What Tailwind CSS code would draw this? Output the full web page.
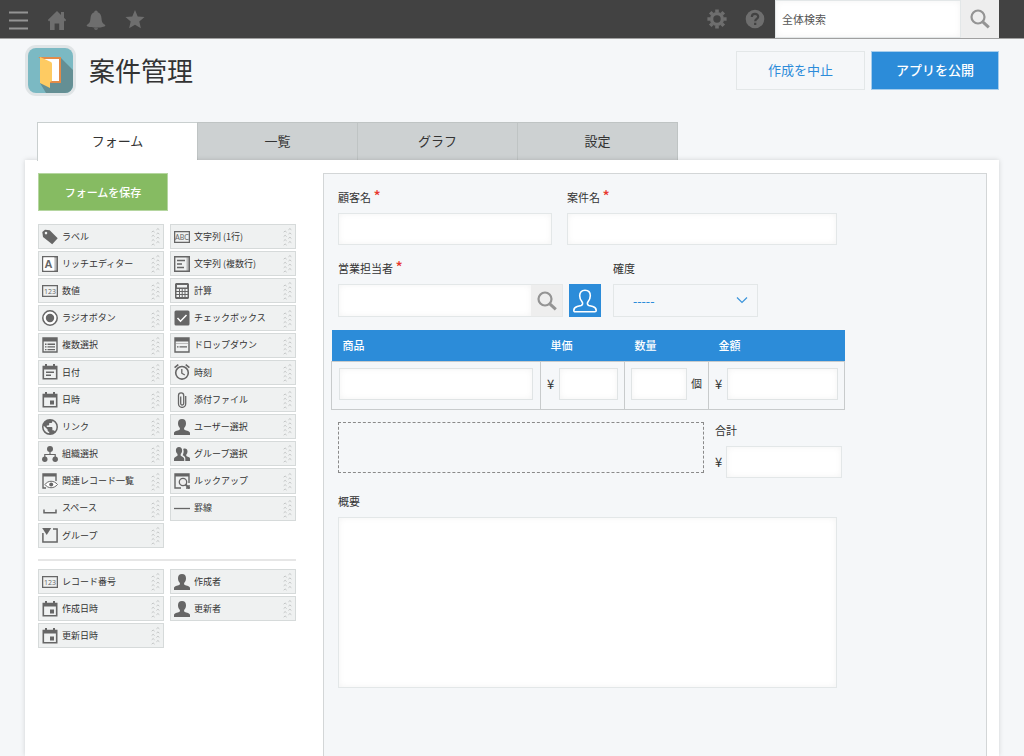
<!DOCTYPE html>
<html lang="ja">
<head>
<meta charset="utf-8">
<meta name="viewport" content="width=device-width, initial-scale=1">
<title>案件管理</title>
<script src="https://cdn.jsdelivr.net/npm/@tailwindcss/browser@4"></script>
</head>
<body class="flex min-h-screen flex-col overflow-x-hidden bg-[#f5f7f9] font-['Noto_Sans_CJK_JP',sans-serif] text-[11px] text-[#333]">

<svg class="hidden" aria-hidden="true">
  <symbol id="i-label" viewBox="0 0 16 16"><path fill="currentColor" fill-rule="evenodd" d="M.3 3 3 .7l4.700.5 8 8-5.500 6L1 8zM4 2.800A1.300 1.300 0 1 0 4 5.400 1.300 1.300 0 0 0 4 2.800z"/></symbol>
  <symbol id="i-text" viewBox="0 0 16 16"><path fill="none" stroke="currentColor" stroke-width="1.300" d="M.6 2.600h14.800v10.800H.6z"/><text x="8" y="11" text-anchor="middle" font-size="7" fill="currentColor" font-family="Lato">ABC</text></symbol>
  <symbol id="i-num" viewBox="0 0 16 16"><path fill="none" stroke="currentColor" stroke-width="1.300" d="M.6 2.600h14.800v10.800H.6z"/><text x="8" y="11" text-anchor="middle" font-size="7" fill="currentColor" font-family="Open Sans">123</text></symbol>
  <symbol id="i-rich" viewBox="0 0 16 16"><path fill="#bbb" d="M12 1h3v14h-3z"/><path fill="none" stroke="currentColor" stroke-width="1.400" d="M.7.7h14.600v14.600H.7z"/><path fill="#fff" d="M1.400 1.400h11v13.200h-11z"/><text x="6.500" y="12" text-anchor="middle" font-size="11" font-weight="700" fill="currentColor" font-family="Liberation Sans">A</text></symbol>
  <symbol id="i-multi" viewBox="0 0 16 16"><path fill="#bbb" d="M12.500 1h2.500v14h-2.500z"/><path fill="none" stroke="currentColor" stroke-width="1.400" d="M.7.7h14.600v14.600H.7zM3 4.500h8M3 8h5M3 11.500h7"/></symbol>
  <symbol id="i-calc" viewBox="0 0 16 16"><path fill="currentColor" fill-rule="evenodd" d="M2 0h12l1 1v14l-1 1H2l-1-1V1zM3 2v2.500h10V2zM2.500 6v2H5V6zM6 6v2h1.700V6zM8.700 6v2h1.800V6zM11.500 6v2h2V6zM2.500 9v2H5V9zM6 9v2h1.700V9zM8.700 9v2h1.800V9zM11.500 9v2h2V9zM2.500 12v2H5v-2zM6 12v2h1.700v-2zM8.700 12v2h1.800v-2zM11.500 12v2h2v-2z"/></symbol>
  <symbol id="i-radio" viewBox="0 0 16 16"><circle cx="8" cy="8" r="7.200" fill="#fff" stroke="currentColor" stroke-width="1.500"/><circle cx="8" cy="8" r="4.200" fill="currentColor"/></symbol>
  <symbol id="i-check" viewBox="0 0 16 16"><rect x=".5" y=".5" width="15" height="15" rx="1.500" fill="currentColor"/><path fill="none" stroke="#fff" stroke-width="1.500" d="m3.500 8 3 3.200L12.500 5"/></symbol>
  <symbol id="i-mselect" viewBox="0 0 16 16"><path fill="none" stroke="currentColor" stroke-width="1.400" d="M1 1h14v14H1z"/><path fill="currentColor" d="M1 1h14v3.500H1zM3 6.500h1.500V8H3zM5.500 6.500H13V8H5.500zM3 9.300h1.500v1.200H3zM5.500 9.300H13v1.200H5.500zM3 12h1.500v1.200H3zM5.500 12H13v1.200H5.500z"/></symbol>
  <symbol id="i-drop" viewBox="0 0 16 16"><path fill="none" stroke="currentColor" stroke-width="1.400" d="M1 1h14v14H1z"/><path fill="currentColor" d="M1 1h14v3.500H1zM3 9.300h1.500v1.200H3zM5.500 9.300H13v1.200H5.500z"/><path fill="#bbb" d="M2 6h12v1H2z"/></symbol>
  <symbol id="i-date" viewBox="0 0 16 16"><path fill="none" stroke="currentColor" stroke-width="1.600" d="M1.300 2.500h13.400v12.200H1.300z"/><path fill="currentColor" d="M1 2h14v3.500H1zM3 0h2v3H3zM11 0h2v3h-2zM4 7.500h8V9H4zM4 10.500h5V12H4z"/></symbol>
  <symbol id="i-datetime" viewBox="0 0 16 16"><path fill="none" stroke="currentColor" stroke-width="1.600" d="M1.300 2.500h13.400v12.200H1.300z"/><path fill="currentColor" d="M1 2h14v3.500H1zM3 0h2v3H3zM11 0h2v3h-2zM8 8.500h4v4H8z"/></symbol>
  <symbol id="i-time" viewBox="0 0 16 16"><circle cx="8" cy="8.800" r="6.300" fill="none" stroke="currentColor" stroke-width="1.600"/><path fill="none" stroke="currentColor" stroke-width="1.300" d="M7.800 5v4.200l3 1.800"/><path fill="none" stroke="currentColor" stroke-width="1.600" d="m.6 3.600 3.700-3M15.400 3.600l-3.700-3"/></symbol>
  <symbol id="i-clip" viewBox="0 0 16 16"><path fill="none" stroke="currentColor" stroke-width="1.300" d="M11.700 4v7.800a3.600 3.600 0 0 1-7.200 0V3.500a2.600 2.600 0 0 1 5.200 0v8a1.500 1.500 0 0 1-3 0V4.500"/></symbol>
  <symbol id="i-link" viewBox="0 0 24 24"><path fill="currentColor" d="M12 0a12 12 0 1 0 0 24 12 12 0 0 0 0-24zm-1.200 21.500A9.600 9.600 0 0 1 2.600 10L8.400 15.600v1.200c0 1.300 1.100 2.400 2.400 2.400zm8.300-3a2.400 2.400 0 0 0-2.300-1.700h-1.200v-3.600c0-.7-.5-1.200-1.200-1.200H7.200V9.600h2.400c.7 0 1.200-.5 1.200-1.200V6h2.400c1.300 0 2.400-1.100 2.400-2.400v-.5a9.600 9.600 0 0 1 3.500 15.400z"/></symbol>
  <symbol id="i-user" viewBox="0 0 16 16"><path fill="currentColor" d="M8 0c2.600 0 4 1.600 4 4.200 0 1.900-.7 3.600-1.900 4.700v1.700c1.200 1 5 1.200 5.900 3.100V16H0v-2.300c.9-1.900 4.700-2.100 5.900-3.100V8.900C4.700 7.800 4 6.100 4 4.200 4 1.600 5.400 0 8 0z"/></symbol>
  <symbol id="i-group" viewBox="0 0 16 16"><path fill="currentColor" d="M5 1c2 0 3.100 1.300 3.100 3.300 0 1.600-.5 2.900-1.400 3.800v1.600c.9.800 3.500 1.200 3.500 3V15H0v-2.300c0-1.800 2.600-2.200 3.500-3V8.100C2.500 7.200 1.900 5.900 1.900 4.300 1.900 2.300 3 1 5 1zM10.800 2.500c1.700 0 2.700 1.100 2.700 2.900 0 1.300-.4 2.400-1.200 3.200V10c.8.700 3.700 1 3.700 2.500V15h-4.700v-2.700c0-1.600-1.300-2.500-2.600-3.100.5-1.200 1-2.500.9-4.200-.1-.9-.1-1.500-.4-2.100.5-.3 1-.4 1.600-.4z"/></symbol>
  <symbol id="i-org" viewBox="0 0 16 16"><path fill="none" stroke="currentColor" stroke-width="1.200" d="M8 5v3.500M2.800 12V8.500h10.400V12"/><circle cx="8" cy="3" r="3" fill="currentColor"/><circle cx="2.800" cy="13.200" r="2.700" fill="currentColor"/><circle cx="13.200" cy="13.200" r="2.700" fill="currentColor"/></symbol>
  <symbol id="i-related" viewBox="0 0 16 16"><path fill="none" stroke="currentColor" stroke-width="1.400" d="M4 15H1V1h13v7"/><path fill="currentColor" d="M1 1h13v2.500H1z"/><path fill="#fff" stroke="currentColor" d="M3 11.500c3-4.300 9-4.300 12.500 0-3.500 4.300-9.500 4.300-12.500 0z"/><circle cx="9.200" cy="11.500" r="2" fill="currentColor"/></symbol>
  <symbol id="i-lookup" viewBox="0 0 16 16"><path fill="none" stroke="currentColor" stroke-width="1.400" d="M7 15H1V1h14v9M15 12v3h-3"/><path fill="currentColor" d="M1 1h14v2.500H1z"/><circle cx="9" cy="9" r="3.700" fill="#eee" stroke="currentColor" stroke-width="1.300"/><path stroke="currentColor" stroke-width="2" d="m11.500 11.500 4 4"/></symbol>
  <symbol id="i-space" viewBox="0 0 16 16"><path fill="none" stroke="currentColor" stroke-width="1.500" d="M2 9.500v3.200h12V9.500"/></symbol>
  <symbol id="i-line" viewBox="0 0 16 16"><path stroke="currentColor" stroke-width="1.300" d="M0 8.500h16"/></symbol>
  <symbol id="i-fgroup" viewBox="0 0 16 16"><path fill="none" stroke="currentColor" stroke-width="1.500" d="M.9 6v9h14.200V2H11"/><path fill="currentColor" d="M.2 1h9L4.700 8z"/></symbol>
  <symbol id="i-dots" viewBox="0 0 10 24"><path fill="none" stroke="#bcbebe" stroke-width=".9" d="M.5 7.500q1.500-2.500 3 0M.5 12q1.500-2.500 3 0M.5 16.500q1.500-2.500 3 0M.5 21q1.500-2.500 3 0M5.500 5q1.500-2.500 3 0M5.500 9.500q1.500-2.500 3 0M5.500 14q1.500-2.500 3 0M5.500 18.500q1.500-2.500 3 0"/></symbol>
  <symbol id="i-search" viewBox="0 0 20 20"><circle cx="8" cy="8" r="6.500" fill="none" stroke="currentColor" stroke-width="2.200"/><path stroke="currentColor" stroke-width="3" d="m12.800 12.800 6 5.500"/></symbol>
</svg>

<header class="flex h-[39px] items-center border-b border-[#a0a0a0] bg-[#424242] pr-[25px] pl-2 text-[#6e6e6e]">
  <nav class="flex items-center gap-[19px] pt-[2px]" aria-label="メイン">
    <button type="button" aria-label="メニュー" class="text-[#949494]"><svg class="size-5" viewBox="0 0 20 20"><path stroke="currentColor" stroke-width="2" d="M1 2.500h19M1 10.500h19M1 18.500h19"/></svg></button>
    <a href="#" aria-label="ホーム"><svg class="size-5" viewBox="0 0 20 20"><path fill="currentColor" d="M10 1 .8 10l1.300 1.400L3 10.600V20h4.600v-6.500h4.600V20H17v-9.400l.9.800L19.200 10 17 7.800V2h-3v3z"/></svg></a>
    <button type="button" aria-label="通知"><svg class="size-5" viewBox="0 0 20 20"><path fill="currentColor" d="M10 .5c1.200 0 1.700.8 1.700 1.700 2.300.8 3.500 2.700 3.800 6 .3 3.600.8 5 3.500 6.500.7.500.2 1.500-.7 1.900-4.700 1.600-11.900 1.600-16.600 0-.9-.4-1.400-1.400-.7-1.900 2.700-1.500 3.200-2.900 3.500-6.500.3-3.300 1.500-5.200 3.800-6C8.300 1.300 8.800.5 10 .5zM8 18.300h4c-.3 1-.9 1.500-2 1.500s-1.700-.5-2-1.500z"/></svg></button>
    <button type="button" aria-label="お気に入り"><svg class="size-5" viewBox="0 0 20 20"><path fill="currentColor" d="m10 0 2.700 6.500 6.800.5-5.200 4.500 1.600 6.800L10 14.700l-5.900 3.600 1.600-6.800L.5 7l6.800-.5z"/></svg></button>
  </nav>
  <div class="ml-auto flex items-center gap-[18px] pr-[10px]">
    <button type="button" aria-label="設定"><svg class="size-5" viewBox="0 0 20 20"><circle cx="10" cy="10" r="5.400" fill="none" stroke="currentColor" stroke-width="3.400"/><path stroke="currentColor" stroke-width="3.600" d="M10 .4v3M10 16.600v3M.4 10h3M16.600 10h3M3.200 3.200l2.100 2.100M14.700 14.700l2.100 2.100M3.200 16.800l2.100-2.100M14.700 5.300l2.100-2.100"/></svg></button>
    <button type="button" aria-label="ヘルプ"><svg class="size-5" viewBox="0 0 20 20"><circle cx="10" cy="10" r="9.300" fill="currentColor"/><path fill="none" stroke="#424242" stroke-width="2.200" d="M6.800 8c0-4.200 6.400-4 6.400-.4 0 2.300-3 2.300-3 4.700M10.200 13.800v2.300"/></svg></button>
  </div>
  <form class="flex h-[38px]" role="search" onsubmit="return false">
    <input type="search" aria-label="全体検索" placeholder="全体検索" class="w-[186px] border border-[#e3e7e8] bg-white px-[6px] text-[11px] text-[#333] shadow-[inset_0_0_6px_#0000000d] placeholder:text-[#555]">
    <button type="submit" aria-label="検索" class="flex w-[38px] items-center justify-center bg-[#eeeeee] text-[#949494]"><svg class="size-5"><use href="#i-search"/></svg></button>
  </form>
</header>

<div class="flex items-center px-[25px] pt-[6px]">
  <svg class="size-[51px]" viewBox="0 0 51 51" aria-hidden="true">
    <rect width="51" height="51" rx="11" fill="#dfe4e6"/><rect x="3" y="3" width="45" height="45" rx="8" fill="#7bb9c3"/>
    <path fill="#648f94" d="M36 13 48 25v15a8 8 0 0 1-8 8H21l-6-10 10-2z"/>
    <path fill="#fff" stroke="#e38b48" stroke-width="2" d="M16 13h19v24H25V21z"/><path fill="#fecb62" d="M15 12l11 5q1 .5 1 2v17l-2 1v6l-10-5z"/>
  </svg>
  <h1 class="ml-[13px] pb-[2px] text-[26px] leading-[40px] text-[#333]">案件管理</h1>
  <div class="ml-auto flex gap-[6px] text-[13px]">
    <button type="button" class="h-[39px] w-[129px] border border-[#e3e7e8] pb-px text-[#2c8cd9]">作成を中止</button>
    <button type="button" class="h-[39px] w-[128px] border border-[#a6cdec] bg-[#2c8cd9] pb-px font-medium text-white">アプリを公開</button>
  </div>
</div>

<nav class="mt-[26px] ml-[37px] flex text-[13px]" aria-label="アプリ設定">
  <a href="#" aria-current="page" class="z-10 -mb-px flex h-[39px] w-[160px] items-center justify-center border-t border-l border-[#c9cfcf] bg-white pb-[3px]">フォーム</a>
  <a href="#" class="flex h-[38px] w-[161px] items-center justify-center border border-b-0 border-[#bfc4c4] bg-[#cdd1d2] pb-[2px]">一覧</a>
  <a href="#" class="flex h-[38px] w-[160px] items-center justify-center border-t border-r border-[#bfc4c4] bg-[#cdd1d2] pb-[2px]">グラフ</a>
  <a href="#" class="flex h-[38px] w-[160px] items-center justify-center border-t border-r border-[#bfc4c4] bg-[#cdd1d2] pb-[2px]">設定</a>
</nav>

<main class="mx-[25px] flex flex-1 gap-[27px] bg-white pt-[13px] pr-3 pl-[13px] shadow-[0_0_5px_#00000026]">
  <aside class="w-[258px] shrink-0">
    <button type="button" class="h-[38px] w-[130px] border border-[#b5d6a0] bg-[#86bb62] text-[11px] font-medium text-white">フォームを保存</button>
    <div id="fields" class="mt-[13px] grid min-h-[324px] grid-cols-2 gap-x-[6px] gap-y-[2px]"></div>
    <hr class="mt-[11px] mb-[8px] border-t-2 border-[#e6e6e6]">
    <div id="system-fields" class="grid grid-cols-2 gap-x-[6px] gap-y-[2px]"></div>
  </aside>

  <form class="min-w-0 flex-1 border border-b-0 border-[#d3d6d7] bg-[#f5f7f9] pl-[14px]" onsubmit="return false">
    <div class="flex gap-[15px] pt-[13px]">
      <div><label for="customer" class="block leading-5">顧客名 <span class="text-[15px] leading-none font-medium text-[#e8382d]">*</span></label>
        <input id="customer" required class="mt-[6px] block h-8 w-[214px] border border-[#e3e7e8] bg-white px-2 shadow-[inset_0_0_6px_#0000000d]"></div>
      <div><label for="deal" class="block leading-5">案件名 <span class="text-[15px] leading-none font-medium text-[#e8382d]">*</span></label>
        <input id="deal" required class="mt-[6px] block h-8 w-[270px] border border-[#e3e7e8] bg-white px-2 shadow-[inset_0_0_6px_#0000000d]"></div>
    </div>
    <div class="mt-[13px] flex gap-3">
      <div><label for="rep" class="block leading-5">営業担当者 <span class="text-[15px] leading-none font-medium text-[#e8382d]">*</span></label>
        <div class="mt-[6px] flex h-[33px]">
          <input id="rep" required class="w-[193px] border border-r-0 border-[#e3e7e8] bg-white px-2 shadow-[inset_0_0_6px_#0000000d]">
          <button type="button" aria-label="検索" class="flex w-8 items-center justify-center border border-l-0 border-[#e6e8e8] bg-[#eeeeee] text-[#949494]"><svg class="size-5"><use href="#i-search"/></svg></button>
          <button type="button" aria-label="ユーザーを選択" class="ml-[6px] flex w-8 items-center justify-center bg-[#2c8cd9] text-white"><svg class="size-6" viewBox="0 0 24 24"><path fill="none" stroke="currentColor" stroke-width="1.600" d="M12 1.200c3.500 0 5.300 2.200 5.300 5.500 0 2.500-.9 4.500-2.400 6.200-1 1.300-.5 3 .9 3.500l4 1.200c2.200.7 3.400 1.800 3.400 3.800 0 .8-.4 1.300-1.400 1.300H2.200c-1 0-1.400-.5-1.400-1.300 0-2 1.200-3.100 3.400-3.800l4-1.200c1.400-.5 1.900-2.200.9-3.500-1.500-1.700-2.400-3.700-2.400-6.200 0-3.300 1.800-5.500 5.300-5.500z"/></svg></button>
        </div></div>
      <div><label for="prob" class="block leading-5">確度</label>
        <div class="relative mt-[6px]">
          <select id="prob" class="block h-[33px] w-[145px] appearance-none border border-[#e3e7e8] bg-transparent pl-[19px] text-[12px] font-medium text-[#2c8cd9]"><option>-----</option></select>
          <svg class="pointer-events-none absolute top-[12px] right-[10px] h-2 w-3" viewBox="0 0 12 8"><path fill="none" stroke="#3b94db" stroke-width="1.200" d="m1 1.500 5 5 5-5"/></svg>
        </div></div>
    </div>

    <table class="mt-[13px] -ml-[7px] w-[514px] table-fixed border-collapse">
      <colgroup><col class="w-[209px]"><col class="w-[84px]"><col class="w-[84px]"><col></colgroup>
      <thead class="bg-[#2c8cd9] text-white"><tr class="h-[31px] text-left">
        <th scope="col" class="pl-[11px] font-medium">商品</th><th scope="col" class="pl-[10px] font-medium">単価</th><th scope="col" class="pl-[10px] font-medium">数量</th><th scope="col" class="pl-[10px] font-medium">金額</th>
      </tr></thead>
      <tbody><tr class="h-[48px] align-top">
        <td class="border border-[#c8cbcc] px-[7px] pt-[6px]"><input aria-label="商品" class="block h-8 w-[194px] border border-[#e0e4e5] bg-white px-2 shadow-[inset_0_0_6px_#0000000d]"></td>
        <td class="border border-[#c8cbcc] px-[6px] pt-[6px]"><div class="flex items-center justify-between"><span class="text-[13px]">¥</span><input aria-label="単価" class="h-8 w-[59px] border border-[#e0e4e5] bg-white px-2 shadow-[inset_0_0_6px_#0000000d]"></div></td>
        <td class="border border-[#c8cbcc] px-[6px] pt-[6px]"><div class="flex items-center justify-between"><input aria-label="数量" class="h-8 w-[56px] border border-[#e0e4e5] bg-white px-2 shadow-[inset_0_0_6px_#0000000d]"><span>個</span></div></td>
        <td class="border border-[#c8cbcc] px-[6px] pt-[6px]"><div class="flex items-center justify-between"><span class="text-[13px]">¥</span><input aria-label="金額" class="h-8 w-[111px] border border-[#e0e4e5] bg-white px-2 shadow-[inset_0_0_6px_#0000000d]"></div></td>
      </tr></tbody>
    </table>

    <div class="flex gap-[11px]">
      <div class="mt-[12px] h-[51px] w-[366px] border border-dashed border-[#8a8a8a]"></div>
      <div class="mt-[10px]"><label for="total" class="block leading-5">合計</label>
        <div class="mt-[6px] flex items-center gap-[4px]"><span class="text-[13px]">¥</span><input id="total" class="h-8 w-[116px] border border-[#e3e7e8] bg-white px-2 shadow-[inset_0_0_6px_#0000000d]"></div></div>
    </div>
    <label for="summary" class="mt-[13px] block leading-5">概要</label>
    <textarea id="summary" class="mt-[6px] block h-[171px] w-[499px] resize-none border border-[#e3e7e8] bg-white p-2 shadow-[inset_0_0_6px_#0000000d]"></textarea>
  </form>
</main>

<script>
const item = ([icon, label]) => label ? `
  <button type="button" draggable="true" class="flex min-h-[25px] items-center border border-[#d6dada] bg-[#eff1f1] pr-[2px] pl-[3px] text-[9px] text-[#333]">
    <svg class="size-4 shrink-0 text-[#666]" aria-hidden="true"><use href="#i-${icon}"/></svg>
    <span class="ml-[4px] whitespace-nowrap">${label}</span>
    <svg class="ml-auto h-[23px] w-[10px] shrink-0" aria-hidden="true"><use href="#i-dots"/></svg>
  </button>` : '<span></span>';
document.getElementById('fields').innerHTML = [
  ['label','ラベル'],['text','文字列 (1行)'],['rich','リッチエディター'],['multi','文字列 (複数行)'],
  ['num','数値'],['calc','計算'],['radio','ラジオボタン'],['check','チェックボックス'],
  ['mselect','複数選択'],['drop','ドロップダウン'],['date','日付'],['time','時刻'],
  ['datetime','日時'],['clip','添付ファイル'],['link','リンク'],['user','ユーザー選択'],
  ['org','組織選択'],['group','グループ選択'],['related','関連レコード一覧'],['lookup','ルックアップ'],
  ['space','スペース'],['line','罫線'],['fgroup','グループ']
].map(item).join('');
document.getElementById('system-fields').innerHTML = [
  ['num','レコード番号'],['user','作成者'],['datetime','作成日時'],['user','更新者'],['datetime','更新日時']
].map(item).join('');
</script>
</body>
</html>
